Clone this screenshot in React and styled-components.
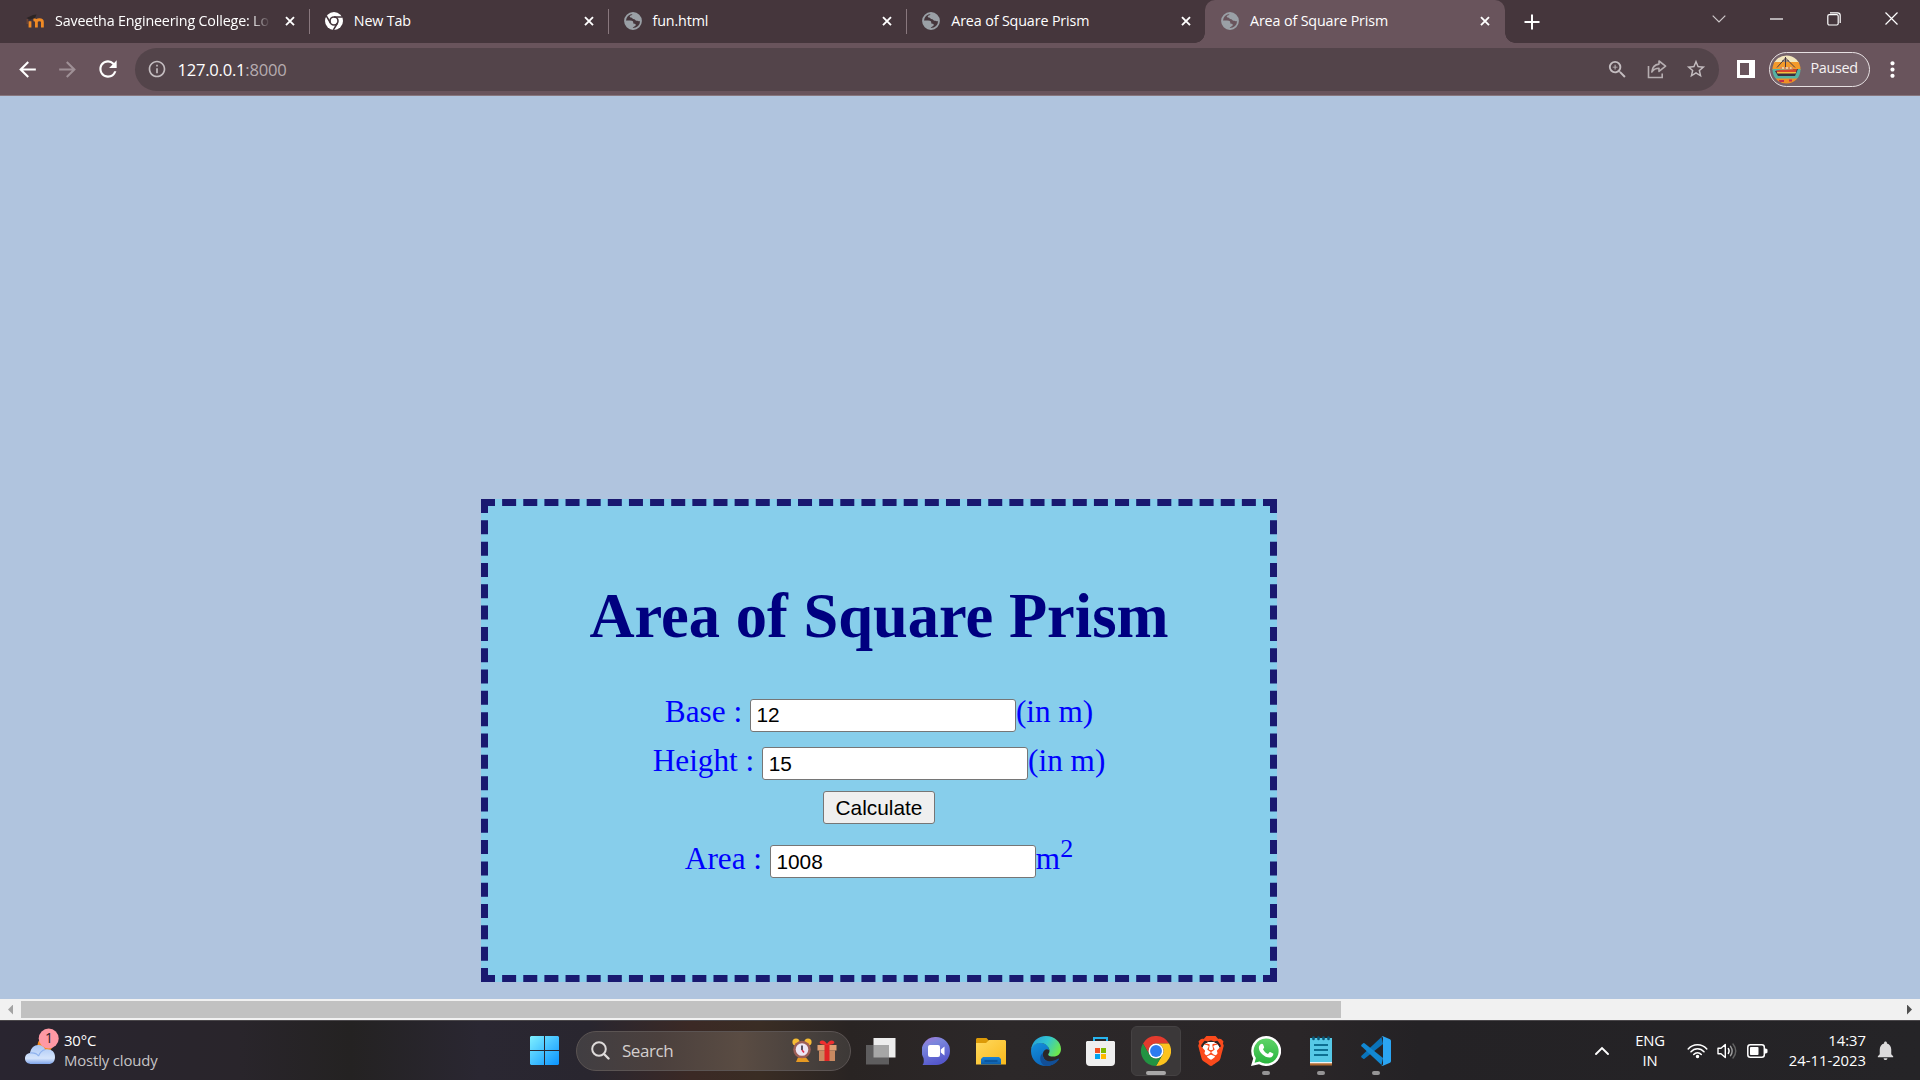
import React from "react";
import styled, { createGlobalStyle, css } from "styled-components";
import { MdArrowBack, MdArrowForward, MdRefresh, MdInfoOutline, MdZoomIn, MdStarBorder, MdMoreVert, MdNotifications } from "react-icons/md";
import { SiBrave } from "react-icons/si";

const UI = `"Open Sans", "Noto Sans", sans-serif`;
const SERIF = `"Liberation Serif", "Times New Roman", serif`;
const ARIAL = `"Liberation Sans", Arial, sans-serif`;

const GlobalStyle = createGlobalStyle`
  *, *::before, *::after { box-sizing: border-box; }
  body { margin: 0; overflow: hidden; }
  svg { display: block; flex: none; }
`;

const Screen = styled.div`
  width: 1920px;
  height: 1080px;
  display: flex;
  flex-direction: column;
  overflow: hidden;
  font-family: ${UI};
`;

/* ---------- browser chrome ---------- */

const TabStrip = styled.header`
  height: 43px;
  flex: none;
  display: flex;
  padding-left: 10px;
  background: #45363c;
`;

const Tab = styled.div`
  position: relative;
  width: ${(p) => (p.$active ? 300 : 298.75)}px;
  flex: none;
  height: 43px;
  display: flex;
  align-items: center;
  padding: 0 ${(p) => (p.$active ? 14 : 13)}px 1px 16px;
  color: #fff;
  ${(p) =>
    p.$active &&
    css`
      background: #69545c;
      border-radius: 10px 10px 0 0;
      &::before,
      &::after {
        content: "";
        position: absolute;
        bottom: 0;
        width: 10px;
        height: 10px;
      }
      &::before {
        left: -10px;
        background: radial-gradient(circle at 0 0, transparent 9.5px, #69545c 10px);
      }
      &::after {
        right: -10px;
        background: radial-gradient(circle at 100% 0, transparent 9.5px, #69545c 10px);
      }
    `}
`;

const TabTitle = styled.span`
  flex: 1;
  margin-left: 11px;
  font-size: 14.3px;
  letter-spacing: ${(p) => p.$spacing || "-0.13px"};
  line-height: 20px;
  margin-top: -1px;
  white-space: nowrap;
  ${(p) =>
    p.$fade &&
    css`
      mask-image: linear-gradient(90deg, #000 196px, transparent 215px);
    `}
`;

const TabClose = styled.span`
  width: 12px;
  margin-left: 8px;
`;

const TabDivider = styled.i`
  position: absolute;
  right: -1px;
  top: 9px;
  width: 1px;
  height: 25px;
  background: #89787e;
`;

const NewTab = styled.div`
  width: 54px;
  display: flex;
  align-items: center;
  justify-content: center;
`;

const WindowButtons = styled.div`
  margin-left: auto;
  display: flex;
  height: 37px;
  & > span {
    width: 57.3px;
    display: flex;
    align-items: center;
    justify-content: center;
  }
`;

const Toolbar = styled.div`
  height: 53px;
  flex: none;
  display: flex;
  align-items: center;
  background: #69545c;
  border-bottom: 1px solid #87767d;
  padding: 0 15px 0 15px;
`;

const NavButton = styled.span`
  width: 40px;
  display: flex;
  color: ${(p) => (p.$dim ? "#9f9096" : "#fff")};
`;

const Omnibox = styled.div`
  flex: none;
  width: 1584px;
  height: 43px;
  margin-left: 1px;
  border-radius: 22px;
  background: #53444a;
  display: flex;
  align-items: center;
  padding: 0 12px 0 12px;
  color: #c4bdc0;
`;

const Url = styled.span`
  flex: 1;
  margin-left: 10px;
  padding-top: 1px;
  font-size: 16.6px;
  letter-spacing: -0.24px;
  line-height: 24px;
  color: #b6acb0;
  b {
    font-weight: 400;
    color: #fff;
  }
`;

const OmniIcons = styled.span`
  display: flex;
  align-items: center;
  gap: 18px;
`;

const SidePanelIcon = styled.span`
  width: 18px;
  height: 18px;
  margin-left: 18px;
  border: solid #fff;
  border-width: 3px 6px 3px 3px;
`;

const Profile = styled.div`
  display: flex;
  align-items: center;
  width: 101px;
  height: 35px;
  margin-left: 14px;
  margin-right: 10px;
  padding-left: 2px;
  border: 1.5px solid #e6e0e2;
  border-radius: 18px;
  background: #75626a;
  color: #f5f2f3;
  font-size: 14.4px;
  letter-spacing: -0.3px;
  line-height: 20px;
  svg {
    margin-right: 9px;
  }
  span {
    padding-bottom: 2px;
  }
`;

/* ---------- page ---------- */

const Page = styled.main`
  height: 903px;
  flex: none;
  padding: 403px 0 0 481px;
  background: #b0c4de;
  font-family: ${SERIF};
`;

const Card = styled.section`
  width: 796px;
  height: 483px;
  border: 7px dashed #191970;
  background: #87ceeb;
  padding-top: 73.5px;
  display: flex;
  flex-direction: column;
  align-items: center;
  color: #00f;
  font-size: 31.25px;
`;

const Title = styled.h1`
  margin: 0 0 42.5px;
  font-size: 62.5px;
  line-height: 72px;
  color: #000080;
  white-space: nowrap;
`;

const Field = styled.label`
  display: flex;
  align-items: baseline;
  height: 48.5px;
  line-height: 36px;
  white-space: pre;
`;

const Input = styled.input`
  width: 266px;
  height: 33px;
  border: 1px solid #767676;
  border-radius: 3px;
  padding: 2px 5.6px;
  margin: 0;
  background: #fff;
  color: #000;
  font: 20.83px ${ARIAL};
`;

const Sup = styled.sup`
  font-size: 26px;
  line-height: 0;
  position: relative;
  top: 0;
`;

const Calculate = styled.button`
  width: 112px;
  height: 33px;
  margin: 0 0 16.5px;
  padding: 0;
  border: 1px solid #767676;
  border-radius: 3px;
  background: #efefef;
  color: #000;
  font: 20.83px ${ARIAL};
`;

const Scrollbar = styled.div`
  height: 21px;
  flex: none;
  display: flex;
  align-items: center;
  justify-content: space-between;
  padding: 0 8px;
  background: #f1f1f1;
`;

const Thumb = styled.div`
  width: 1320px;
  height: 17px;
  margin: 0 auto 0 8px;
  background: #c1c1c1;
`;

const Arrow = styled.i`
  width: 5px;
  height: 10px;
  background: ${(p) => (p.$right ? "#505050" : "#a3a3a3")};
  clip-path: ${(p) => (p.$right ? "polygon(0 0, 100% 50%, 0 100%)" : "polygon(100% 0, 0 50%, 100% 100%)")};
`;

/* ---------- taskbar ---------- */

const Taskbar = styled.footer`
  flex: 1;
  display: flex;
  align-items: center;
  border-top: 1px solid #4a474a;
  background: linear-gradient(90deg, #292530 0, #29252b 240px, #242222 350px, #2a2732 480px, #29262f 590px, #3b2925 690px, #3a2d24 760px, #292423 850px, #2c2829 1000px, #2a2628 1300px, #242225 1420px, #252427 1920px);
`;

const Weather = styled.div`
  display: flex;
  align-items: center;
  width: 530px;
  padding-left: 24px;
  color: #fff;
  svg {
    margin-bottom: 9px;
  }
`;

const WeatherText = styled.div`
  margin-left: 5px;
  margin-bottom: 2px;
  font-size: 14.9px;
  line-height: 20px;
  letter-spacing: -0.15px;
  div + div {
    color: #c6c4c6;
  }
`;

const SearchPill = styled.div`
  width: 275px;
  height: 40px;
  margin: 0 5px 0 17px;
  border: 1px solid #5b5453;
  border-radius: 20px;
  display: flex;
  align-items: center;
  padding: 0 13px 0 14px;
  background: linear-gradient(90deg, #413e42, #4b403d 30%, #5a4c43 60%, #4a423e 82%, #3d3937);
  color: #d4cfce;
  font-size: 17px;
  letter-spacing: -0.45px;
`;

const SearchLabel = styled.span`
  flex: 1;
  margin-left: 12px;
  padding-bottom: 1px;
`;

const SearchArt = styled.span`
  display: flex;
  align-items: center;
  gap: 5px;
`;

const AppSlot = styled.div`
  position: relative;
  width: 50px;
  height: 50px;
  margin-right: 5px;
  display: flex;
  align-items: center;
  justify-content: center;
  border-radius: 6px;
  ${(p) =>
    p.$current &&
    css`
      background: #3b3839;
      border: 1px solid #454243;
    `}
`;

const RunMark = styled.i`
  position: absolute;
  bottom: ${(p) => (p.$wide ? 0 : 1)}px;
  left: 50%;
  width: ${(p) => (p.$wide ? 20 : 8)}px;
  height: 4px;
  transform: translateX(-50%);
  border-radius: 2px;
  background: ${(p) => (p.$wide ? "#a9a8a8" : "#959495")};
`;

const Tray = styled.div`
  margin-left: auto;
  display: flex;
  align-items: center;
  padding-right: 23px;
  color: #fff;
  font-size: 14.8px;
  line-height: 20px;
`;

const Language = styled.div`
  width: 50px;
  margin: 0 12px 1px 16px;
  text-align: center;
  letter-spacing: -0.2px;
`;

const Clock = styled.div`
  width: 98px;
  margin: 0 8px 2px 0;
  text-align: right;
`;

const StatusIcons = styled.div`
  display: flex;
  align-items: center;
  gap: 9px;
`;

/* ---------- icons ---------- */

const Globe = () => (
  <svg width="18" height="18" viewBox="0 0 18 18">
    <circle cx="9" cy="9" r="8" fill="none" stroke="#9aa0a6" strokeWidth="1.8" />
    <path d="M9.4 1.2 C7.8 2.2 8.2 3.2 6.6 3.6 C5.4 4 5.4 5.4 6.8 5.6 C8.6 5.8 8.4 7.2 10.2 7.2 C11.4 7.2 11.2 8.6 12.6 8.8 C14.4 9 14.8 9.6 17 9 A8 8 0 0 0 9.4 1.2Z" fill="#9aa0a6" />
    <path d="M1.2 8.4 L6 8.6 C9 8.8 9.6 9.8 9.2 11.2 C10 12 12 11.4 11.8 13 C11.4 14.6 9.2 14.2 8.4 16.8 A8 8 0 0 1 1.2 8.4Z" fill="#9aa0a6" />
  </svg>
);

const Moodle = () => (
  <svg width="18" height="18" viewBox="0 0 18 18">
    <path d="M4 15.5 V9.2 M10.4 15.5 V10 C10.4 7 16.4 7 16.4 10 V15.5 M10.4 15.5 V10 C10.4 8.4 9 7.6 7.4 7.8" fill="none" stroke="#f08a24" strokeWidth="2.8" />
    <path d="M.5 6 L7 3 L10.5 2.6 L9 6 L4 7.8 Z" fill="#2b2424" />
    <path d="M1.2 7 V12" stroke="#7b4a35" strokeWidth="1" />
  </svg>
);

const ChromeMono = () => (
  <svg width="18" height="18" viewBox="0 0 18 18">
    <circle cx="9" cy="9" r="9" fill="#fff" />
    <circle cx="9" cy="9" r="4" fill="none" stroke="#45363c" strokeWidth="1.6" />
    <path d="M9 5 H17.4 M5.5 11 L1.3 3.9 M12.5 11 L8.4 18" stroke="#45363c" strokeWidth="1.5" />
  </svg>
);

const Cross = () => (
  <svg width="12" height="12" viewBox="0 0 12 12">
    <path d="M2 2.2 L10 10.2 M10 2.2 L2 10.2" stroke="#fff" strokeWidth="1.9" />
  </svg>
);

const ShareIcon = () => (
  <svg width="20" height="20" viewBox="0 0 20 20" fill="none" stroke="#b5adb0" strokeWidth="1.6">
    <path d="M1.5 7 V18.5 H15.2 V14.5" />
    <path d="M12 2 L18.6 7.2 L12 12.4 V9.3 C8.6 9.3 6.4 10.6 4.8 13 C5.2 8.6 7.6 5.6 12 5.1 Z" strokeLinejoin="round" />
  </svg>
);

const Avatar = () => (
  <svg width="29" height="29" viewBox="0 0 29 29">
    <defs>
      <clipPath id="avatar"><circle cx="14.5" cy="14.5" r="14" /></clipPath>
    </defs>
    <g clipPath="url(#avatar)">
      <path fill="#f2e6bd" d="M0 0h29v8H0z" />
      <path fill="#f39a2b" d="M0 7h29v8H0z" />
      <path fill="#56b3a2" d="M0 14h29v9H0z" />
      <path fill="#ef8f26" d="M0 23h29v6H0z" />
      <path fill="#3c2c3e" d="M3 16 L26 14 L23 21 H6z" />
      <path fill="#d9442c" d="M4 15.5 L25 14 L24 17 H5z" />
      <path fill="#f3c13f" d="M4.8 17h19.4l-.6 1.6H5.4z" />
      <path fill="#d98a5a" d="M8 12h13v2.500H8z" />
      <path fill="#f4e3b2" d="M10 12.3h2v1.4h-2zM14 12.3h2v1.4h-2zM18 12.3h1.6v1.4H18z" />
      <path stroke="#4a3a44" strokeWidth="1" fill="none" d="M13.5 2V12M13.5 3L5 12.5M13.5 3L23 12.5M10 6h7" />
      <path fill="#56b3a2" d="M0 21.500h29v2H0z" />
      <path fill="#c4304a" d="M7 25h5v2H7zM17 24.5h3v2h-3z" />
    </g>
  </svg>
);

const CloudIcon = () => (
  <svg width="35" height="36" viewBox="0 0 35 36">
    <defs>
      <linearGradient id="cloud" x1="0" y1="0" x2="0" y2="1">
        <stop offset="0" stopColor="#a9c6f5" /><stop offset=".7" stopColor="#d5e4fb" /><stop offset="1" stopColor="#7ea4ea" />
      </linearGradient>
    </defs>
    <circle cx="21" cy="17" r="7.5" fill="#f58a1c" />
    <path d="M8 36 C3.5 36 1 33.8 1 30.5 C1 27.2 3.5 25.2 6 25 C7 19.5 10.5 16.8 14.5 17 C17.5 17 20 18.6 21.2 21.5 C27 20.5 31 23.5 31 29 C31 33.5 28.5 36 24.5 36 Z" fill="url(#cloud)" />
    <path d="M6 25 C10 24.5 13 25.8 14.5 28 M14.5 28 C16 24.5 18 22.3 21.2 21.5" fill="none" stroke="#8fb2ee" strokeWidth="1.2" />
    <circle cx="24.7" cy="10.5" r="10" fill="#ff99a4" />
    <text x="25" y="15.4" textAnchor="middle" fontFamily="Open Sans, sans-serif" fontSize="14" fill="#2a2024">1</text>
  </svg>
);

const StartIcon = () => (
  <svg width="29" height="29" viewBox="0 0 29 29">
    <defs>
      <linearGradient id="start" gradientUnits="userSpaceOnUse" x1="0" y1="0" x2="29" y2="29">
        <stop offset="0" stopColor="#7ff0ff" /><stop offset="1" stopColor="#0a93ff" />
      </linearGradient>
    </defs>
    <path fill="url(#start)" d="M1 0H14V14H0V1zM15 0H28L29 1V14H15zM0 15H14V29H1L0 28zM15 15H29V28L28 29H15z" />
  </svg>
);

const SearchIcon = () => (
  <svg width="19" height="19" viewBox="0 0 19 19" fill="none" stroke="#dedbda" strokeLinecap="round">
    <circle cx="8" cy="8" r="6.8" strokeWidth="2" />
    <path d="M13 13 L17.5 17.5" strokeWidth="2.4" />
  </svg>
);

const AlarmClock = () => (
  <svg width="20" height="25" viewBox="0 0 20 25">
    <path fill="#e79a22" d="M4 24 L6 19.5 H14 L17.5 24z" />
    <circle cx="4" cy="4" r="3.6" fill="#f7bd33" /><circle cx="16" cy="4" r="3.6" fill="#f7bd33" />
    <circle cx="10" cy="11.5" r="8.8" fill="#9d5f57" />
    <circle cx="10" cy="11.5" r="6.3" fill="#ece6f4" />
    <path d="M10 7.5 V12" stroke="#242030" strokeWidth="1.5" /><path d="M10 12 L12 14.5" stroke="#e0304a" strokeWidth="1.6" />
  </svg>
);

const Gift = () => (
  <svg width="20" height="21" viewBox="0 0 20 21">
    <path fill="#e0a074" d="M.5 5h19v5.5H.5z" /><path fill="#c98a61" d="M2 10.5h16V21H2z" />
    <path fill="#e02424" d="M7.5 4.5h5V21h-5z" />
    <path fill="#f03030" d="M10 5 C5 5 1.5 4 3 1.5 C5 -.8 8.5 1 10 4 C11.5 1 15 -.8 17 1.5 C18.5 4 15 5 10 5z" />
  </svg>
);

const TaskView = () => (
  <svg width="30" height="28" viewBox="0 0 30 28">
    <path fill="#ededed" d="M7.5 1h22v19.5h-22z" />
    <path fill="#5e5d5e" d="M0 8h23v19.5H0z" />
    <path fill="#a6a6a6" d="M7.5 8H23v12.5H7.5z" />
  </svg>
);

const ChatIcon = () => (
  <svg width="28" height="28" viewBox="0 0 28 28">
    <defs>
      <linearGradient id="chat" x1="0" y1="0" x2=".4" y2="1">
        <stop offset="0" stopColor="#a878d8" /><stop offset=".35" stopColor="#7a86dc" /><stop offset="1" stopColor="#5558cc" />
      </linearGradient>
    </defs>
    <path fill="url(#chat)" d="M14 0a14 14 0 1 1 0 28H0.5C2 26 2 24 1.5 21A14 14 0 0 1 14 0z" />
    <rect x="6" y="8" width="12" height="12" rx="2" fill="#fff" />
    <path fill="#fff" d="M18.8 12.5 L22.5 9.5 V18.5 L18.8 15.5z" />
  </svg>
);

const FolderIcon = () => (
  <svg width="30" height="28" viewBox="0 0 30 28">
    <defs>
      <linearGradient id="folder" x1="0" y1="0" x2="1" y2="1"><stop offset="0" stopColor="#ffd95e" /><stop offset="1" stopColor="#f9b91c" /></linearGradient>
      <linearGradient id="pocket" x1="0" y1="0" x2="0" y2="1"><stop offset="0" stopColor="#1a84d8" /><stop offset="1" stopColor="#0c5ca8" /></linearGradient>
    </defs>
    <path fill="#dc9a08" d="M0 2 L1 1 H10.5 L13 3.8 L10 7 H0z" />
    <path fill="url(#folder)" d="M0 6H10L13 3H29L30 4V27.5H0z" />
    <path fill="url(#pocket)" d="M5 27.5V22L7 20H23L25 22V27.5z" />
    <path stroke="#084a8c" strokeWidth="1.3" d="M8.5 24H21.5" />
  </svg>
);

const EdgeIcon = () => (
  <svg width="30" height="30" viewBox="0 0 30 30">
    <defs>
      <linearGradient id="edgeTop" x1="0" y1=".2" x2="1" y2=".6"><stop offset="0" stopColor="#249edb" /><stop offset=".5" stopColor="#33c6cf" /><stop offset="1" stopColor="#6ee84a" /></linearGradient>
      <linearGradient id="edgeLow" x1="0" y1="0" x2=".6" y2="1"><stop offset="0" stopColor="#1592de" /><stop offset="1" stopColor="#0a62b8" /></linearGradient>
    </defs>
    <path fill="url(#edgeLow)" d="M0 15 C0 9 5.5 6.5 10 7 C15 7.3 18.5 10.5 18 14 C15 11.5 11 15 12 20 C13 25.5 20 28 26.5 24.5 C23.5 28.5 19.5 30 15 30 C7 30 0 24 0 15z" />
    <path fill="#124f97" d="M12 17 C10.5 24 18 28.5 27.2 22.6 C28 22.2 28.3 23 27.6 23.9 C24 28.5 19 30.3 14 29.9 C8 27.5 8 19 12 17z" />
    <path fill="url(#edgeTop)" d="M0 14 C1 5.5 7 0 15 0 C23.5 0 30 6 30 13 C30 18 26.5 20.5 22.5 20.5 C19 20.5 17 19.4 17.2 18.4 C17.5 17.5 18.5 17 18.5 15 C18.5 10.5 14 7 9.5 7 C5 7 1.5 9.5 0 14z" />
  </svg>
);

const StoreIcon = () => (
  <svg width="30" height="30" viewBox="0 0 30 30">
    <path d="M8 6 V2 H21 V6" fill="none" stroke="#27b4ee" strokeWidth="2" />
    <path fill="#efefef" d="M0 6 L1 5H28L29 6V26 Q29 30 25 30H4 Q0 30 0 26z" />
    <path fill="#f25022" d="M9 12h5v5H9z" /><path fill="#7fba00" d="M15 12h5v5h-5z" />
    <path fill="#00a4ef" d="M9 18h5v5H9z" /><path fill="#ffb900" d="M15 18h5v5h-5z" />
  </svg>
);

const ChromeIcon = () => (
  <svg width="30" height="30" viewBox="0 0 48 48">
    <path fill="#e33b2e" d="M3.2 12 A24 24 0 0 1 44.8 12 H24 A12 12 0 0 0 13.6 30z" />
    <path fill="#fcc31e" d="M44.8 12 A24 24 0 0 1 24 48 L34.4 30 A12 12 0 0 0 24 12z" />
    <path fill="#229342" d="M24 48 A24 24 0 0 1 3.2 12 L13.6 30 A12 12 0 0 0 34.4 30z" />
    <circle cx="24" cy="24" r="12" fill="#fff" /><circle cx="24" cy="24" r="9.5" fill="#2b7bf0" />
  </svg>
);

const BraveIcon = styled(SiBrave)`
  color: #fb4a1c;
  background: radial-gradient(circle, #fff 9px, transparent 9.5px);
`;

const WhatsAppIcon = () => (
  <svg width="30" height="30" viewBox="0 0 30 30">
    <defs><linearGradient id="wa" x1="0" y1="0" x2="0" y2="1"><stop offset="0" stopColor="#5fd468" /><stop offset="1" stopColor="#29b43e" /></linearGradient></defs>
    <path fill="#fff" d="M15 0 A15 15 0 1 1 8 28.2 L0 30 L2.2 22.5 A15 15 0 0 1 15 0z" />
    <path fill="url(#wa)" d="M15 2.5 A12.5 12.5 0 1 1 8.5 25.6 L3.6 26.7 L4.9 22.1 A12.5 12.5 0 0 1 15 2.5z" />
    <path fill="#fff" d="M9.5 8.2 C10.3 7.4 11.6 7.5 12 8.3 L13.1 11 C13.3 11.8 12.5 12.5 12 13.2 C13 15.5 15 17 17 17.9 L18.7 16 C19.2 15.6 21.5 17 22.3 17.5 C22.6 19.5 21 21.3 19 21.5 C13.5 21.8 7.5 15.5 7.9 11.5 C8 10 8.5 9.1 9.5 8.2z" />
  </svg>
);

const NotepadIcon = () => (
  <svg width="22" height="30" viewBox="0 0 22 30">
    <path fill="#b06a30" d="M0 26h22v3.5H0z" /><path fill="#f2f2f2" d="M0 25h22v2.3H0z" />
    <path fill="#56c8e6" d="M0 2h22v24H0z" />
    <path stroke="#0d6f92" strokeWidth="2" d="M4 9h14M4 14h14M4 19h14" />
    <path stroke="#0a5878" strokeWidth="2.6" strokeLinecap="round" d="M3.5 1.5v1.5M8.5 1.5v1.5M13.5 1.5v1.5M18.5 1.5v1.5" />
  </svg>
);

const CodeIcon = () => (
  <svg width="30" height="30" viewBox="0 0 30 30">
    <path fill="#0a73ba" d="M22 8 L3.5 22.8 Q2.8 23.2 2.2 22.8 L.5 21.2 Q-.2 20.5 .5 19.8 L20.5 1z" />
    <path fill="#1288d3" d="M22 22 L3.5 7.2 Q2.8 6.8 2.2 7.2 L.5 8.8 Q-.2 9.5 .5 10.2 L20.5 29z" />
    <path fill="#2ba5f3" d="M22 .2 L29 3.3 Q30 3.8 30 5 V25 Q30 26.2 29 26.7 L22 29.8 Q21 30 20.3 29.2 Q22 29.5 22 28 V2 Q22 .6 20.3 .8 Q21 0 22 .2z" />
  </svg>
);

const Wifi = () => (
  <svg width="21" height="16" viewBox="0 0 21 16" fill="none" stroke="#fff" strokeWidth="1.5" strokeLinecap="round">
    <path d="M1.2 6 C6 .2 15 .2 19.8 6" /><path d="M4 8.8 C7.5 4.6 13.5 4.6 17 8.8" /><path d="M6.7 11.5 C8.8 9 12.2 9 14.3 11.5" />
    <circle cx="10.5" cy="13.5" r="1" fill="#fff" />
  </svg>
);

const Speaker = () => (
  <svg width="21" height="18" viewBox="0 0 21 18" fill="none" stroke="#fff" strokeWidth="1.4" strokeLinejoin="round" strokeLinecap="round">
    <path d="M1 6.3 H4 L8.3 2.5 V15.5 L4 11.7 H1z" /><path d="M11.3 6.5 Q13 9 11.3 11.5" />
    <path d="M13.5 4.3 Q16.8 9 13.5 13.7" stroke="#a0a0a0" /><path d="M16 2 Q21.5 9 16 16" stroke="#646464" />
  </svg>
);

const Battery = () => (
  <svg width="21" height="14" viewBox="0 0 21 14">
    <rect x=".8" y=".8" width="16.5" height="12.4" rx="2.5" fill="none" stroke="#fff" strokeWidth="1.5" />
    <rect x="3" y="3" width="8.5" height="8" rx=".8" fill="#fff" /><path fill="#fff" d="M18 4.5 H19 L20.5 5.5V8.5L19 9.5H18z" />
  </svg>
);

const tabs = [
  { title: "Saveetha Engineering College: Lo", icon: <Moodle />, fade: true, divider: true, spacing: "-0.17px" },
  { title: "New Tab", icon: <ChromeMono />, divider: true },
  { title: "fun.html", icon: <Globe />, divider: true },
  { title: "Area of Square Prism", icon: <Globe /> },
  { title: "Area of Square Prism", icon: <Globe />, active: true },
];

const apps = [
  { id: "taskview", icon: <TaskView /> },
  { id: "chat", icon: <ChatIcon /> },
  { id: "explorer", icon: <FolderIcon /> },
  { id: "edge", icon: <EdgeIcon /> },
  { id: "store", icon: <StoreIcon /> },
  { id: "chrome", icon: <ChromeIcon />, current: true },
  { id: "brave", icon: <BraveIcon size={30} /> },
  { id: "whatsapp", icon: <WhatsAppIcon />, running: true },
  { id: "notepad", icon: <NotepadIcon />, running: true },
  { id: "code", icon: <CodeIcon />, running: true },
];

export default function App() {
  return (
    <Screen>
      <GlobalStyle />
      <TabStrip>
        {tabs.map((t, i) => (
          <Tab key={i} $active={t.active}>
            {t.icon}
            <TabTitle $fade={t.fade} $spacing={t.spacing}>{t.title}</TabTitle>
            <TabClose><Cross /></TabClose>
            {t.divider && <TabDivider />}
          </Tab>
        ))}
        <NewTab>
          <svg width="16" height="16" viewBox="0 0 16 16"><path d="M8 .5V15.5M.5 8H15.5" stroke="#fff" strokeWidth="2" /></svg>
        </NewTab>
        <WindowButtons>
          <span><svg width="14" height="8" viewBox="0 0 14 8"><path d="M.7 .7L7 7L13.3 .7" fill="none" stroke="#cfc9cb" strokeWidth="1.2" /></svg></span>
          <span><svg width="13" height="2" viewBox="0 0 13 2"><path d="M0 1H13" stroke="#fff" strokeWidth="1.2" /></svg></span>
          <span><svg width="14" height="14" viewBox="0 0 14 14" fill="none" stroke="#fff" strokeWidth="1.2"><rect x=".8" y="2.6" width="10.4" height="10.4" rx="1.5" /><path d="M3 .8H10.5Q13.2 .8 13.2 3.5V11" /></svg></span>
          <span><svg width="13" height="13" viewBox="0 0 13 13"><path d="M.5 .5L12.5 12.5M12.5 .5L.5 12.5" stroke="#fff" strokeWidth="1.2" /></svg></span>
        </WindowButtons>
      </TabStrip>
      <Toolbar>
        <NavButton><MdArrowBack size={25} /></NavButton>
        <NavButton $dim><MdArrowForward size={25} /></NavButton>
        <NavButton><MdRefresh size={26} /></NavButton>
        <Omnibox>
          <MdInfoOutline size={20} />
          <Url><b>127.0.0.1</b>:8000</Url>
          <OmniIcons>
            <MdZoomIn size={23} />
            <ShareIcon />
            <MdStarBorder size={22} />
          </OmniIcons>
        </Omnibox>
        <SidePanelIcon />
        <Profile><Avatar /><span>Paused</span></Profile>
        <MdMoreVert size={25} color="#fff" />
      </Toolbar>
      <Page>
        <Card>
          <Title>Area of Square Prism</Title>
          <Field>{"Base : "}<Input defaultValue="12" />(in m)</Field>
          <Field>{"Height : "}<Input defaultValue="15" />(in m)</Field>
          <Calculate>Calculate</Calculate>
          <Field>{"Area : "}<Input defaultValue="1008" /><span>m<Sup>2</Sup></span></Field>
        </Card>
      </Page>
      <Scrollbar>
        <Arrow />
        <Thumb />
        <Arrow $right />
      </Scrollbar>
      <Taskbar>
        <Weather>
          <CloudIcon />
          <WeatherText><div>30°C</div><div>Mostly cloudy</div></WeatherText>
        </Weather>
        <StartIcon />
        <SearchPill>
          <SearchIcon />
          <SearchLabel>Search</SearchLabel>
          <SearchArt><AlarmClock /><Gift /></SearchArt>
        </SearchPill>
        {apps.map((a) => (
          <AppSlot key={a.id} $current={a.current}>
            {a.icon}
            {(a.current || a.running) && <RunMark $wide={a.current} />}
          </AppSlot>
        ))}
        <Tray>
          <svg width="14" height="9" viewBox="0 0 14 9"><path d="M1 8L7 2L13 8" fill="none" stroke="#fff" strokeWidth="1.9" strokeLinecap="round" /></svg>
          <Language>ENG<br />IN</Language>
          <StatusIcons><Wifi /><Speaker /><Battery /></StatusIcons>
          <Clock>14:37<br />24-11-2023</Clock>
          <MdNotifications size={23} color="#dcdbdc" />
        </Tray>
      </Taskbar>
    </Screen>
  );
}
